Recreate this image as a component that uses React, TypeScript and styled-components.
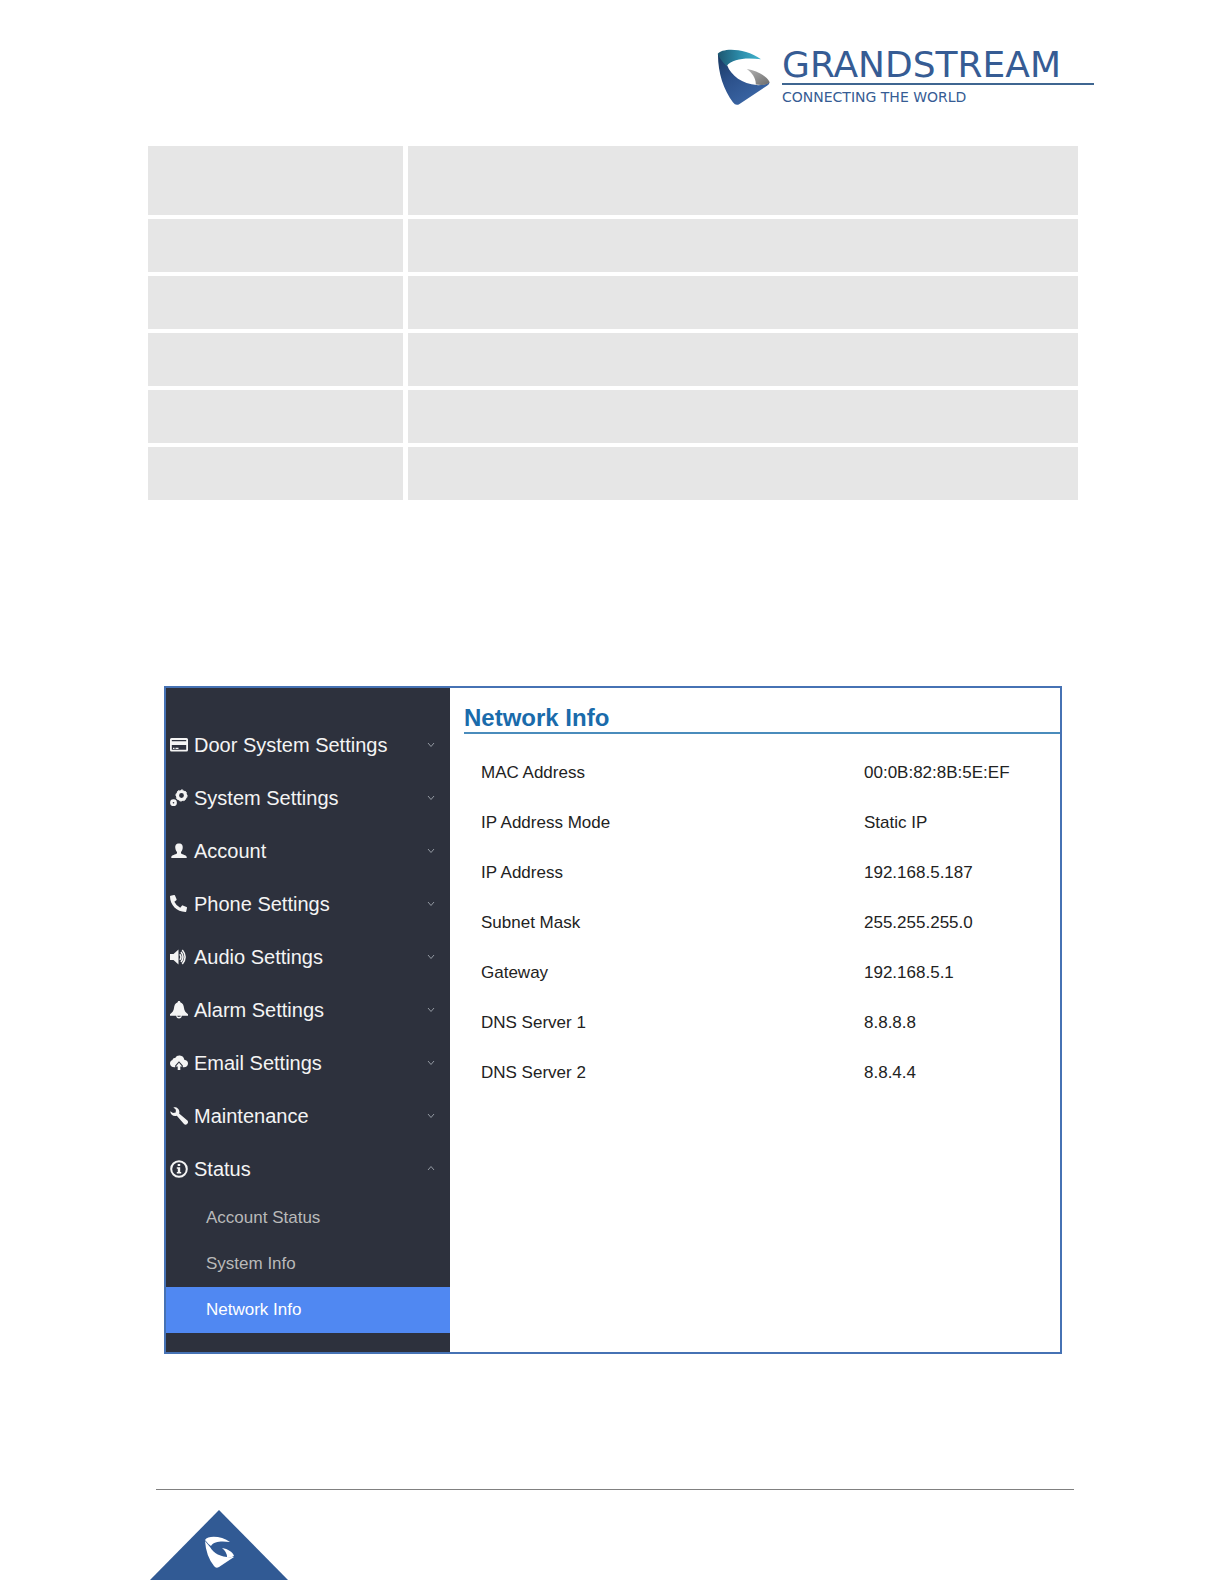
import React from 'react';
import styled, { createGlobalStyle } from 'styled-components';
import { FaPhoneAlt } from 'react-icons/fa';

const GlobalStyle = createGlobalStyle`
  * { box-sizing: border-box; }
  body {
    margin: 0;
    background: #fff;
    font-family: "Liberation Sans", Arial, sans-serif;
    color: #222;
  }
`;

const Page = styled.div`
  display: flex;
  flex-direction: column;
  padding: 49px 146px 4px 148px;
`;

const Brand = styled.header`
  display: flex;
  align-self: flex-end;
  gap: 12px;
  margin-right: -16px;
  height: 60px;
  color: #365c94;
`;

const BrandText = styled.div`
  display: flex;
  flex-direction: column;
  width: 312px;
  font-family: "DejaVu Sans", Verdana, sans-serif;
`;

const BrandName = styled.div`
  height: 36px;
  border-bottom: 2px solid #3f6691;
  font-size: 36px;
  line-height: 32px;
`;

const Tagline = styled.div`
  padding-top: 4px;
  font-size: 14px;
  line-height: 16px;
`;

const SpecTable = styled.table`
  width: 100%;
  margin-top: 37px;
  border-collapse: collapse;
  table-layout: fixed;
`;

const SpecRow = styled.tr<{ $tall?: boolean }>`
  height: ${(p) => (p.$tall ? 71 : 57)}px;
`;

const SpecCell = styled.td<{ $label?: boolean }>`
  width: ${(p) => (p.$label ? '257px' : 'auto')};
  padding: 0;
  background: #e6e6e6;
  background-clip: padding-box;
  border-bottom: 4px solid #fff;
  border-right: ${(p) => (p.$label ? '5px solid #fff' : '0')};
`;

const Panel = styled.section`
  display: grid;
  grid-template-columns: 284px 1fr;
  margin: 182px 16px 0;
  border: 2px solid #4672b4;
`;

const Sidebar = styled.nav`
  padding: 30px 0 19px;
  background: #2d313d;
`;

const MenuButton = styled.button`
  display: flex;
  align-items: center;
  gap: 6px;
  width: 100%;
  height: 53px;
  padding: 0 15px 0 4px;
  border: 0;
  background: none;
  color: #f4f4f4;
  font: 20px/24px "Liberation Sans", Arial, sans-serif;
  text-align: left;
  cursor: pointer;
`;

const MenuLabel = styled.span`
  flex: 1;
`;

const SubLink = styled.a<{ $active?: boolean }>`
  display: block;
  padding-left: 40px;
  font-size: 17px;
  line-height: 46px;
  text-decoration: none;
  color: ${(p) => (p.$active ? '#fff' : '#b9b9b9')};
  background: ${(p) => (p.$active ? '#5088f2' : 'transparent')};
`;

const Content = styled.main`
  padding-left: 14px;
`;

const Title = styled.h1`
  margin: 0 0 14px;
  padding-top: 16px;
  height: 46px;
  border-bottom: 2px solid #4a8cbc;
  color: #1a6bab;
  font-size: 24px;
  line-height: 28px;
`;

const InfoTable = styled.table`
  width: 100%;
  border-collapse: collapse;
  font-size: 17px;
  line-height: 20px;
`;

const InfoLabel = styled.th`
  width: 400px;
  height: 50px;
  padding: 0 0 0 17px;
  font-weight: normal;
  text-align: left;
`;

const InfoValue = styled.td`
  padding: 0;
`;

const Footer = styled.footer`
  margin: 135px 4px 0 8px;
  border-top: 1px solid #808080;
`;

const FooterMark = styled.svg`
  display: block;
  margin: 20px 0 0 -6px;
`;

const Glyph = ({ children }: { children: React.ReactNode }) => (
  <svg width="18" height="18" viewBox="0 0 18 18" fill="currentColor" aria-hidden="true">
    {children}
  </svg>
);

const CardIcon = () => (
  <Glyph>
    <path fillRule="evenodd" d="M1.500 2h15Q18 2 18 3.500v10.500q0 1.500-1.500 1.500h-15Q0 15.500 0 14v-10.500Q0 2 1.500 2ZM1.800 4v1.300h14.400V4ZM1.800 9v4.800h14.400V9ZM3 11.800h1.500v1.200H3ZM5.500 11.800h3v1.200h-3Z" />
  </Glyph>
);

const GearsIcon = () => (
  <Glyph>
    <g fill="none" stroke="currentColor">
      <circle cx="11.500" cy="6.500" r="4" strokeWidth="3.200" />
      <circle cx="11.500" cy="6.500" r="5.600" strokeWidth="1" strokeDasharray="2.200 2" />
      <circle cx="3.500" cy="13.700" r="2.100" strokeWidth="2.600" />
    </g>
  </Glyph>
);

const UserIcon = () => (
  <Glyph>
    <path d="M9 1.500c3 0 4 2 3.700 4.500-.2 1.800-.8 3-1.700 4v1.500c1.500 1 5.500 1.500 5.700 3.500v1H1.300v-1c.2-2 4.200-2.500 5.700-3.500V10C6.100 9 5.500 7.800 5.300 6 5 3.500 6 1.500 9 1.500Z" />
  </Glyph>
);

const PhoneIcon = () => (
  <Glyph>
    <FaPhoneAlt size={17} />
  </Glyph>
);

const SpeakerIcon = () => (
  <Glyph>
    <path d="M0 6h3.500L8.500 1.500v15L3.500 12H0Z" />
    <g fill="none" stroke="currentColor" strokeWidth="1.500">
      <path d="M9.800 6.200q2.400 2.800 0 5.600" />
      <path d="M11 4q4 5 0 10" />
      <path d="M12.300 2q5.600 7 0 14" />
    </g>
  </Glyph>
);

const BellIcon = () => (
  <Glyph>
    <path fillRule="evenodd" d="M9 0c.9 0 1.300.5 1.300 1.300C13 2.200 13.700 4.500 14 7c.3 2.500 1.500 4.500 4 6.200v1.500h-6.200C11.500 16.800 10.500 17.500 9 17.500s-2.500-.7-2.800-2.800H0v-1.500C2.500 11.500 3.700 9.500 4 7c.3-2.500 1-4.800 3.700-5.700C7.700.5 8.100 0 9 0ZM7.200 14.700c.2 1.600 3.400 1.600 3.600 0Z" />
  </Glyph>
);

const CloudIcon = () => (
  <Glyph>
    <path d="M4.500 13.300C1.800 13.300 0 11.700 0 9.500c0-1.800 1-3 2.500-3.400C2.600 4.400 4 3.700 5.200 4 6.200 2 8 1.300 9.800 1.500c2.700.2 4.200 2 4.500 4.300C16.700 6 18 7.500 18 9.600c0 2.200-1.700 3.700-4 3.700h-1.200v-1.800L9 7.300l-3.800 4.200v1.800Z" />
    <path d="M9 8.800l3.200 3.600H10.300V16H7.700v-3.600H5.800Z" />
  </Glyph>
);

const WrenchIcon = () => (
  <Glyph>
    <path d="M3.300.3C6.500-.5 9.400 1.800 9.400 4.900c0 .6-.1 1.100-.3 1.600l8.300 7.100c2 2-1.200 5.500-3.400 3.500L6.800 8.800C3.500 9.700.5 8 .2 4.200l2.800 1.900 2.700-.7.200-2.700Z" />
  </Glyph>
);

const InfoIcon = () => (
  <Glyph>
    <circle cx="9" cy="9" r="7.800" fill="none" stroke="currentColor" strokeWidth="2" />
    <path d="M7.700 4h2.500v2H7.700ZM6.800 7.300h3.400V12h1v1.500H6.800V12h1V8.800h-1Z" />
  </Glyph>
);

const Chevron = ({ up }: { up?: boolean }) => (
  <svg width="8" height="7" viewBox="0 0 8 7" fill="none" stroke="#949aa3" aria-hidden="true">
    <path d={up ? 'M1 5l3-3.500L7 5' : 'M1 2l3 3.500L7 2'} />
  </svg>
);

const Shield = () => (
  <svg width="53" height="57" viewBox="48 26 160 172" aria-hidden="true">
    <defs>
      <linearGradient id="crest" x1="0" y1="0" x2="1" y2="0">
        <stop offset="0" stopColor="#1d5670" />
        <stop offset="0.500" stopColor="#2b8aa8" />
        <stop offset="1" stopColor="#42b4cd" />
      </linearGradient>
      <linearGradient id="body" x1="0" y1="0" x2="0.700" y2="1">
        <stop offset="0" stopColor="#17375f" />
        <stop offset="0.450" stopColor="#2c518b" />
        <stop offset="1" stopColor="#3c68a8" />
      </linearGradient>
      <linearGradient id="inner" x1="0" y1="0" x2="1" y2="1">
        <stop offset="0" stopColor="#b4b4b4" />
        <stop offset="1" stopColor="#6c6c6c" />
      </linearGradient>
    </defs>
    <path fill="url(#body)" d="M51 40L79 76C90 106 125 132 168 135Q190 136 207 126Q206 132 199 137L116 192Q105 199 96 187C68 150 50 96 51 40Z" />
    <path fill="url(#crest)" d="M50 41C62 22 133 22 181 57C137 52 96 54 77 77C65 67 56 54 50 41Z" />
    <path fill="url(#inner)" d="M138 86C168 91 198 107 207 126C197 135 182 136 165 133C166 113 154 98 138 86Z" />
  </svg>
);

const menu = [
  { label: 'Door System Settings', icon: <CardIcon /> },
  { label: 'System Settings', icon: <GearsIcon /> },
  { label: 'Account', icon: <UserIcon /> },
  { label: 'Phone Settings', icon: <PhoneIcon /> },
  { label: 'Audio Settings', icon: <SpeakerIcon /> },
  { label: 'Alarm Settings', icon: <BellIcon /> },
  { label: 'Email Settings', icon: <CloudIcon /> },
  { label: 'Maintenance', icon: <WrenchIcon /> },
  { label: 'Status', icon: <InfoIcon />, open: true },
];

const statusPages = ['Account Status', 'System Info', 'Network Info'];

const info = [
  ['MAC Address', '00:0B:82:8B:5E:EF'],
  ['IP Address Mode', 'Static IP'],
  ['IP Address', '192.168.5.187'],
  ['Subnet Mask', '255.255.255.0'],
  ['Gateway', '192.168.5.1'],
  ['DNS Server 1', '8.8.8.8'],
  ['DNS Server 2', '8.8.4.4'],
];

export default function App() {
  return (
    <>
      <GlobalStyle />
      <Page>
        <Brand>
          <Shield />
          <BrandText>
            <BrandName>GRANDSTREAM</BrandName>
            <Tagline>CONNECTING THE WORLD</Tagline>
          </BrandText>
        </Brand>

        <SpecTable>
          <tbody>
            {[0, 1, 2, 3, 4, 5].map((row) => (
              <SpecRow key={row} $tall={row === 0}>
                <SpecCell $label />
                <SpecCell />
              </SpecRow>
            ))}
          </tbody>
        </SpecTable>

        <Panel>
          <Sidebar>
            {menu.map((item) => (
              <MenuButton key={item.label} type="button" aria-expanded={!!item.open}>
                {item.icon}
                <MenuLabel>{item.label}</MenuLabel>
                <Chevron up={item.open} />
              </MenuButton>
            ))}
            {statusPages.map((name) => (
              <SubLink key={name} href="#" $active={name === 'Network Info'}>
                {name}
              </SubLink>
            ))}
          </Sidebar>
          <Content>
            <Title>Network Info</Title>
            <InfoTable>
              <tbody>
                {info.map(([label, value]) => (
                  <tr key={label}>
                    <InfoLabel scope="row">{label}</InfoLabel>
                    <InfoValue>{value}</InfoValue>
                  </tr>
                ))}
              </tbody>
            </InfoTable>
          </Content>
        </Panel>

        <Footer>
          <FooterMark width="138" height="70" viewBox="0 0 138 70" aria-hidden="true">
            <path fill="#315a94" d="M69 0L138 70H0Z" />
            <g fill="#fff">
              <path d="M55 30C58 25 72 26 80 32C72 31 64 31 61 36Q58 34 55 30Z" />
              <path d="M55 31L60 37C64 44 72 48 84 47L69 57Q66 59 64 56Q56 46 55 31Z" />
              <path d="M72 38C78 39 83 42 84 46Q81 48 77 47Q77 42 72 38Z" />
            </g>
          </FooterMark>
        </Footer>
      </Page>
    </>
  );
}
